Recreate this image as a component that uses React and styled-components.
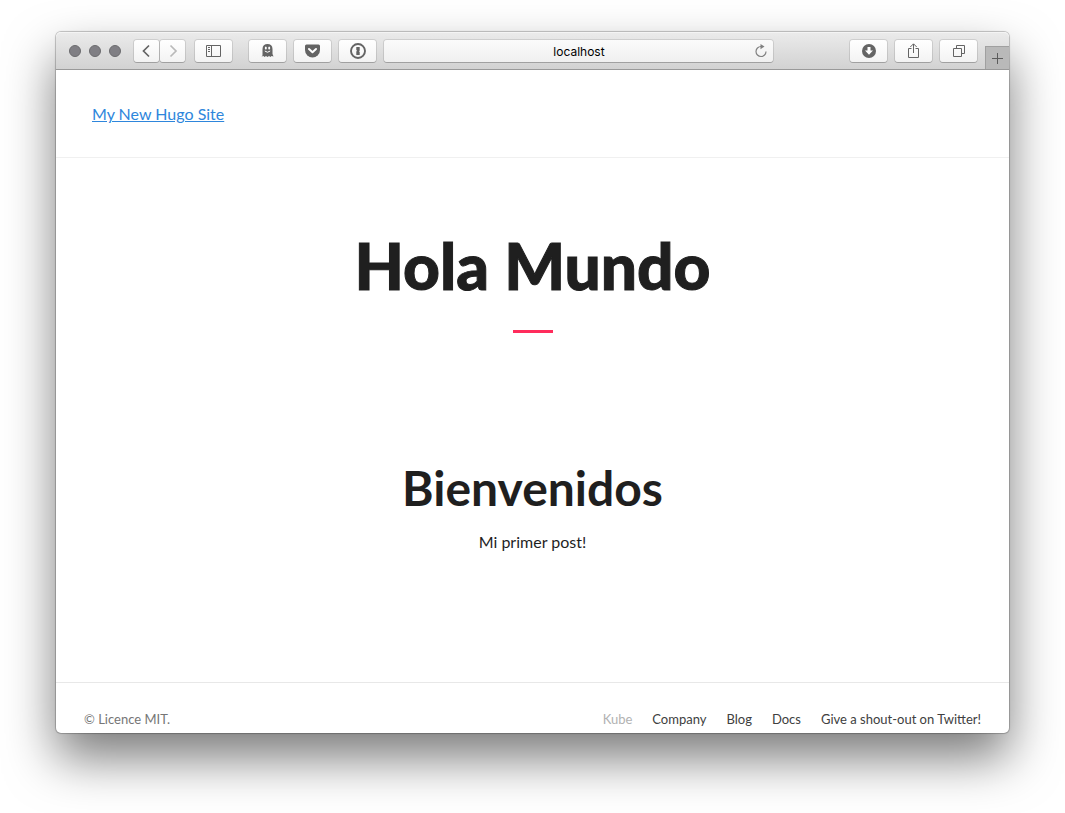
import React from "react";
import styled, { createGlobalStyle } from "styled-components";

const GlobalStyle = createGlobalStyle`
  *, *::before, *::after { box-sizing: border-box; }
  body { margin: 0; background: #fff; color: #1f1f1f; font-family: Lato, sans-serif; }
`;

const Desktop = styled.div`
  display: flex;
  min-height: 100vh;
  padding: 32px 56px 80px;
  overflow: hidden;
`;

const BrowserWindow = styled.div`
  flex: 1;
  min-width: 0;
  display: flex;
  flex-direction: column;
  border-radius: 5px;
  background: #fff;
  box-shadow: 0 0 0 1px rgba(0, 0, 0, 0.14), 0 0 2px rgba(0, 0, 0, 0.3), 0 25px 50px rgba(0, 0, 0, 0.52);
`;

const Toolbar = styled.div`
  display: flex;
  align-items: center;
  height: 38px;
  padding-left: 13px;
  border-bottom: 1px solid #999;
  border-radius: 5px 5px 0 0;
  background: linear-gradient(#ebebeb, #d2d2d2);
  box-shadow: inset 0 1px #f4f4f4;
`;

const Lights = styled.div`
  display: flex;
  gap: 8px;
  margin-right: 13px;
`;

const Light = styled.span`
  width: 12px;
  height: 12px;
  border: 1px solid #6b6b6e;
  border-radius: 50%;
  background: #807f84;
`;

const Group = styled.div`
  display: flex;
  gap: ${(p) => p.$gap || 8}px;
  margin-right: ${(p) => p.$after || 8}px;
`;

const ToolButton = styled.button`
  display: flex;
  align-items: center;
  justify-content: center;
  width: ${(p) => (p.$narrow ? 25 : 37)}px;
  height: 22px;
  padding: 0;
  border: 0;
  border-radius: 3px;
  background: linear-gradient(#fff, #f3f3f3);
  box-shadow: 0 0 0 1px rgba(0, 0, 0, 0.1), 0 1px rgba(0, 0, 0, 0.16);
  color: ${(p) => (p.$muted ? "#b9b9b9" : "#646464")};
`;

const AddressBar = styled.div`
  flex: 1;
  display: flex;
  align-items: center;
  height: 22px;
  margin-right: 77px;
  padding: 0 5px 0 20px;
  border-radius: 3px;
  background: linear-gradient(#fbfbfb, #f0f0f0);
  box-shadow: 0 0 0 1px rgba(0, 0, 0, 0.1), 0 1px rgba(0, 0, 0, 0.16);
`;

const AddressInput = styled.input`
  flex: 1;
  min-width: 0;
  padding: 2px 0 0;
  border: 0;
  outline: 0;
  background: none;
  color: #000;
  font: 12px/20px Inter, sans-serif;
  text-align: center;
`;

const ReloadButton = styled.button`
  display: flex;
  padding: 0;
  border: 0;
  background: none;
  color: #808080;
`;

const NewTabButton = styled.button`
  display: flex;
  align-items: center;
  justify-content: center;
  align-self: flex-end;
  width: 24px;
  height: 23px;
  padding: 0;
  border: solid #a0a0a0;
  border-width: 1px 0 0 1px;
  background: #b9b9b9;
  color: #5c5c5c;
`;

const SiteHeader = styled.header`
  padding: 32px 36px 31px;
  border-bottom: 1px solid #f0f0f0;
  font-size: 16px;
  line-height: 24px;
`;

const SiteLink = styled.a`
  color: #2e86dc;
  text-decoration: underline;
`;

const Main = styled.main`
  flex: 1;
  padding: 72px 36px;
  text-align: center;
`;

const Title = styled.h1`
  margin: 0;
  font-family: "Lato Black", Lato, sans-serif;
  font-size: 64px;
  font-weight: 900;
  line-height: 72px;
  -webkit-text-stroke: 1px currentColor;
`;

const Accent = styled.hr`
  width: 40px;
  height: 3px;
  margin: 28px auto 119px;
  border: 0;
  background: #ff2c5c;
`;

const PostTitle = styled.h2`
  margin: 0 0 6px;
  font-size: 48px;
  font-weight: 700;
  line-height: 72px;
`;

const PostText = styled.p`
  margin: 0;
  font-size: 16px;
  line-height: 24px;
`;

const SiteFooter = styled.footer`
  display: flex;
  justify-content: space-between;
  padding: 26px 28px 4px;
  border-top: 1px solid #e8e8e8;
  color: #767676;
  font-size: 13px;
  line-height: 20px;
`;

const FooterNav = styled.nav`
  display: flex;
  gap: 20px;
`;

const FooterLink = styled.a`
  color: ${(p) => (p.$muted ? "#b2b2b2" : "#404040")};
  text-decoration: none;
`;

const Icon = ({ size = 16, children }) => (
  <svg width={size} height={size} viewBox={`0 0 ${size} ${size}`} fill="none" stroke="currentColor" aria-hidden="true">
    {children}
  </svg>
);

const BackIcon = () => <Icon><path d="M10 2.500 4.500 8l5.500 5.500" strokeWidth="1.700" /></Icon>;
const ForwardIcon = () => <Icon><path d="M5.500 2.500 11 8l-5.500 5.500" strokeWidth="1.700" /></Icon>;
const SidebarIcon = () => (
  <Icon size={15}><path d="M.5 2.500h14v11H.5zM5.500 2.500v11M2 4.500h2M2 6.500h2M2 8.500h2" /></Icon>
);
const GhostIcon = () => (
  <Icon size={15}>
    <path d="M2.500 12.500V6c0-3.300 2-5 5-5s5 1.700 5 5v5l1 2.500-2-.5-1 1-1.500-1-1.500 1-1.500-1-1.500 1-1-1-2 .5z" fill="currentColor" stroke="none" />
    <ellipse cx="5.800" cy="5" rx="1" ry="1.600" fill="#fff" stroke="none" />
    <ellipse cx="9.200" cy="5" rx="1" ry="1.600" fill="#fff" stroke="none" />
    <path d="M4.800 8q2.700 2.500 5.400 0" stroke="#fff" />
  </Icon>
);
const PocketIcon = () => (
  <Icon size={15}>
    <path d="M1.500 1.500h12q1.500 0 1.500 1.500v4A7.500 7.500 0 0 1 0 7V3Q0 1.500 1.500 1.500z" fill="currentColor" stroke="none" />
    <path d="m4 6 3.500 3.300L11 6" stroke="#fff" strokeWidth="2" strokeLinecap="round" strokeLinejoin="round" />
  </Icon>
);
const OnePasswordIcon = () => (
  <Icon>
    <circle cx="8" cy="8" r="7" strokeWidth="1.900" />
    <path d="M6.300 4h3.400v3.500l-.7.7.7.800v3H6.300V8.500l.7-.7-.7-.800z" fill="currentColor" stroke="none" />
  </Icon>
);
const ReloadIcon = () => (
  <Icon size={14}>
    <path d="M7 2.500A5 5 0 1 0 12 7.500" strokeWidth="1.200" />
    <path d="M6.500 0 10.500 2.500l-4 2.700z" fill="currentColor" stroke="none" />
  </Icon>
);
const DownloadIcon = () => (
  <Icon>
    <circle cx="8" cy="8" r="7" fill="currentColor" stroke="none" />
    <path d="M6.500 4h3v3.500H12l-4 4.300-4-4.300h2.500z" fill="#fff" stroke="none" />
  </Icon>
);
const ShareIcon = () => (
  <Icon size={15}><path d="M5.500 5.500h-3v9h10v-9h-3M7.500 10V1M4.300 4 7.500.8 10.700 4" /></Icon>
);
const TabsIcon = () => (
  <Icon size={15}><path d="M2.500 5.500h8v8h-8zM5.500 5.500v-3h8v8h-3" /></Icon>
);
const PlusIcon = () => <Icon size={11}><path d="M5.500 0v11M0 5.500h11" /></Icon>;

const extensions = [
  ["Ghostery", GhostIcon],
  ["Pocket", PocketIcon],
  ["1Password", OnePasswordIcon],
];

const actions = [
  ["Downloads", DownloadIcon],
  ["Share", ShareIcon],
  ["Show all tabs", TabsIcon],
];

const footerLinks = ["Kube", "Company", "Blog", "Docs", "Give a shout-out on Twitter!"];

const renderTool = ([label, Glyph]) => (
  <ToolButton key={label} type="button" aria-label={label}><Glyph /></ToolButton>
);

export default function App() {
  return (
    <>
      <GlobalStyle />
      <Desktop>
        <BrowserWindow>
          <Toolbar>
            <Lights><Light /><Light /><Light /></Lights>
            <Group $gap={1} $after={10}>
              <ToolButton type="button" $narrow aria-label="Back"><BackIcon /></ToolButton>
              <ToolButton type="button" $narrow $muted aria-label="Forward"><ForwardIcon /></ToolButton>
            </Group>
            <Group $after={17}>{renderTool(["Sidebar", SidebarIcon])}</Group>
            <Group>{extensions.map(renderTool)}</Group>
            <AddressBar>
              <AddressInput aria-label="Address" defaultValue="localhost" />
              <ReloadButton type="button" aria-label="Reload"><ReloadIcon /></ReloadButton>
            </AddressBar>
            <Group>{actions.map(renderTool)}</Group>
            <NewTabButton type="button" aria-label="New tab"><PlusIcon /></NewTabButton>
          </Toolbar>
          <SiteHeader><SiteLink href="#">My New Hugo Site</SiteLink></SiteHeader>
          <Main>
            <Title>Hola Mundo</Title>
            <Accent />
            <article>
              <PostTitle>Bienvenidos</PostTitle>
              <PostText>Mi primer post!</PostText>
            </article>
          </Main>
          <SiteFooter>
            <span>© Licence MIT.</span>
            <FooterNav>
              {footerLinks.map((label, i) => (
                <FooterLink key={label} href="#" $muted={i === 0}>{label}</FooterLink>
              ))}
            </FooterNav>
          </SiteFooter>
        </BrowserWindow>
      </Desktop>
    </>
  );
}
